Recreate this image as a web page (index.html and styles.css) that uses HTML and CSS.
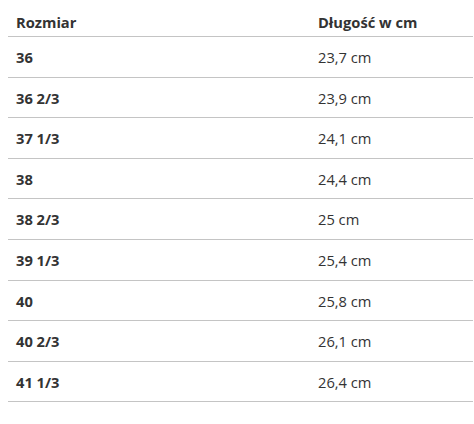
FILE: index.html
```html
<!DOCTYPE html>
<html lang="pl">
<head>
<meta charset="utf-8">
<link rel="stylesheet" href="styles.css">
</head>
<body>
<table class="sizes">
  <thead>
    <tr><th class="c1">Rozmiar</th><th class="c2">Długość w cm</th></tr>
  </thead>
  <tbody>
    <tr><td class="size">36</td><td>23,7 cm</td></tr>
    <tr><td class="size">36 2/3</td><td>23,9 cm</td></tr>
    <tr><td class="size">37 1/3</td><td>24,1 cm</td></tr>
    <tr><td class="size">38</td><td>24,4 cm</td></tr>
    <tr><td class="size">38 2/3</td><td>25 cm</td></tr>
    <tr><td class="size">39 1/3</td><td>25,4 cm</td></tr>
    <tr><td class="size">40</td><td>25,8 cm</td></tr>
    <tr><td class="size">40 2/3</td><td>26,1 cm</td></tr>
    <tr><td class="size">41 1/3</td><td>26,4 cm</td></tr>
  </tbody>
</table>
</body>
</html>
```

FILE: styles.css
```css
html, body {
  margin: 0;
  padding: 0;
  background: #fff;
}
body {
  font-family: "Open Sans", "Noto Sans", sans-serif;
  font-size: 14.7px;
  color: #333;
}
.sizes {
  margin-left: 8px;
  width: 465px;
  border-collapse: collapse;
  table-layout: fixed;
}
.sizes th, .sizes td {
  text-align: left;
  padding: 11px 8px 9px;
  line-height: 19.6px;
  border-bottom: 1px solid #c4c4c4;
  vertical-align: middle;
}
.sizes th {
  font-weight: 700;
  padding-top: 13px;
  padding-bottom: 3.4px;
}
.sizes .c1 {
  width: 286px;
}
.sizes td {
  font-weight: 400;
}
.sizes td.size {
  font-weight: 700;
}
```
